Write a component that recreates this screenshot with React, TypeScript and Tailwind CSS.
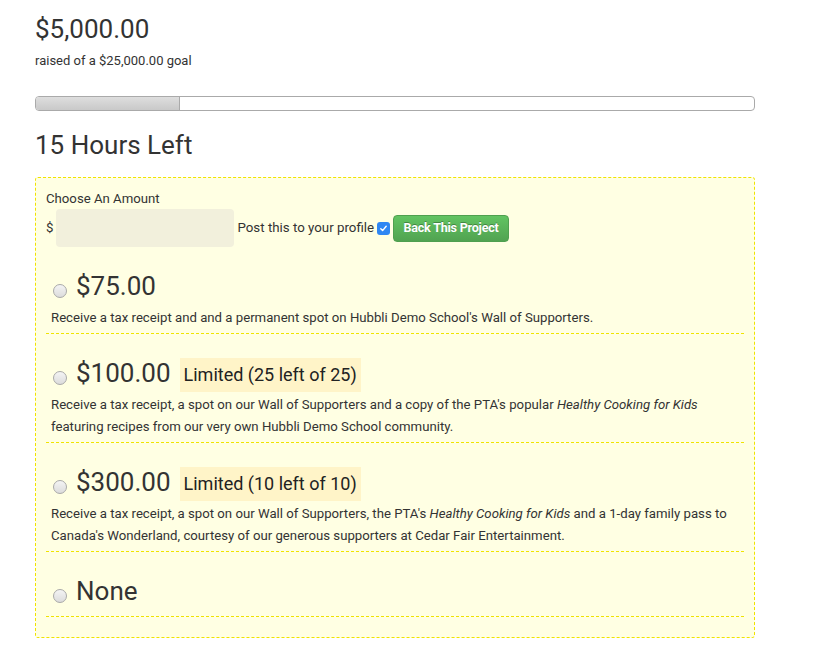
import { Fragment } from "react";

interface Reward {
  amount: string;
  limit?: string;
  description?: React.ReactNode;
}

const rewards: Reward[] = [
  {
    amount: "$75.00",
    description: (
      <>Receive a tax receipt and and a permanent spot on Hubbli Demo School's Wall of Supporters.</>
    ),
  },
  {
    amount: "$100.00",
    limit: "Limited (25 left of 25)",
    description: (
      <>
        Receive a tax receipt, a spot on our Wall of Supporters and a copy of the PTA's popular{" "}
        <em>Healthy Cooking for Kids</em> featuring recipes from our very own Hubbli Demo School community.
      </>
    ),
  },
  {
    amount: "$300.00",
    limit: "Limited (10 left of 10)",
    description: (
      <>
        Receive a tax receipt, a spot on our Wall of Supporters, the PTA's <em>Healthy Cooking for Kids</em> and
        a 1-day family pass to Canada's Wonderland, courtesy of our generous supporters at Cedar Fair Entertainment.
      </>
    ),
  },
  { amount: "None" },
];

function Radio() {
  return (
    <span className="mt-[5px] ml-[2px] block h-[14px] w-[14px] shrink-0 rounded-full border border-[#a9a9a9] bg-gradient-to-b from-[#f4f4f4] to-[#dcdcdc]" />
  );
}

function Checkbox() {
  return (
    <span className="ml-[3px] flex h-[13px] w-[13px] items-center justify-center rounded-[3px] bg-[#2f87f3]">
      <svg width="9" height="9" viewBox="0 0 9 9" fill="none">
        <path d="M1.8 4.8 L3.6 6.6 L7.2 2.2" stroke="white" strokeWidth="1.4" strokeLinecap="round" strokeLinejoin="round" />
      </svg>
    </span>
  );
}

export default function App() {
  const raised = 5000;
  const goal = 25000;
  const pct = (raised / goal) * 100;

  return (
    <div className="min-h-[669px] bg-white font-['Roboto','Liberation_Sans',sans-serif] text-[#333]">
      <div className="w-[755px] pl-[35px]">
        <h2 className="mt-[11px] text-[26px] leading-[36px]">$5,000.00</h2>
        <p className="mt-[4px] text-[13px] leading-[20px]">raised of a $25,000.00 goal</p>

        <div className="mt-[25px] h-[15px] overflow-hidden rounded-[4px] border border-[#aaa] bg-white">
          <div
            className="h-full border-r border-[#aaa] bg-gradient-to-b from-[#dedede] to-[#c9c9c9]"
            style={{ width: `${pct}%` }}
          />
        </div>

        <h3 className="mt-[16px] text-[26px] leading-[36px]">15 Hours Left</h3>

        <div className="mt-[14px] rounded-[3px] border border-dashed border-[#f0e400] bg-[#ffffe3] px-[10px] pt-[10px] pb-[20px]">
          <div className="text-[13.2px] leading-[21px]">Choose An Amount</div>
          <div className="flex h-[38px] items-center text-[13.3px]">
            <span>$</span>
            <input
              type="text"
              className="ml-[3px] h-[38px] w-[178px] rounded-[4px] bg-[#f2f0dc] outline-none"
            />
            <span className="ml-[3px]">Post this to your profile</span>
            <Checkbox />
            <button
              type="button"
              className="ml-[3px] h-[27px] w-[116px] rounded-[4px] border border-[#4fa04f] bg-gradient-to-b from-[#62c462] to-[#51a351] text-[12.5px] font-bold tracking-[-0.2px] text-white [text-shadow:0_-1px_0_rgba(0,0,0,0.3)]"
            >
              Back This Project
            </button>
          </div>

          {rewards.map((r) => (
            <Fragment key={r.amount}>
              <div
                className={`border-b border-dashed border-[#f0e400] px-[5px] pt-[24px] ${r.description ? "pb-[4px]" : "pb-[6px]"}`}
              >
                <div className="flex h-[34px] items-center">
                  <Radio />
                  <span className="mb-[5px] ml-[9px] text-[26px] leading-[30px]">{r.amount}</span>
                  {r.limit && (
                    <span className="ml-[9px] h-[34px] bg-[#fff4c8] px-[4px] text-[18px] leading-[34px] text-[#222]">
                      {r.limit}
                    </span>
                  )}
                </div>
                {r.description && <p className="mt-[2px] text-[13.2px] leading-[22px]">{r.description}</p>}
              </div>
            </Fragment>
          ))}
        </div>
      </div>
    </div>
  );
}
